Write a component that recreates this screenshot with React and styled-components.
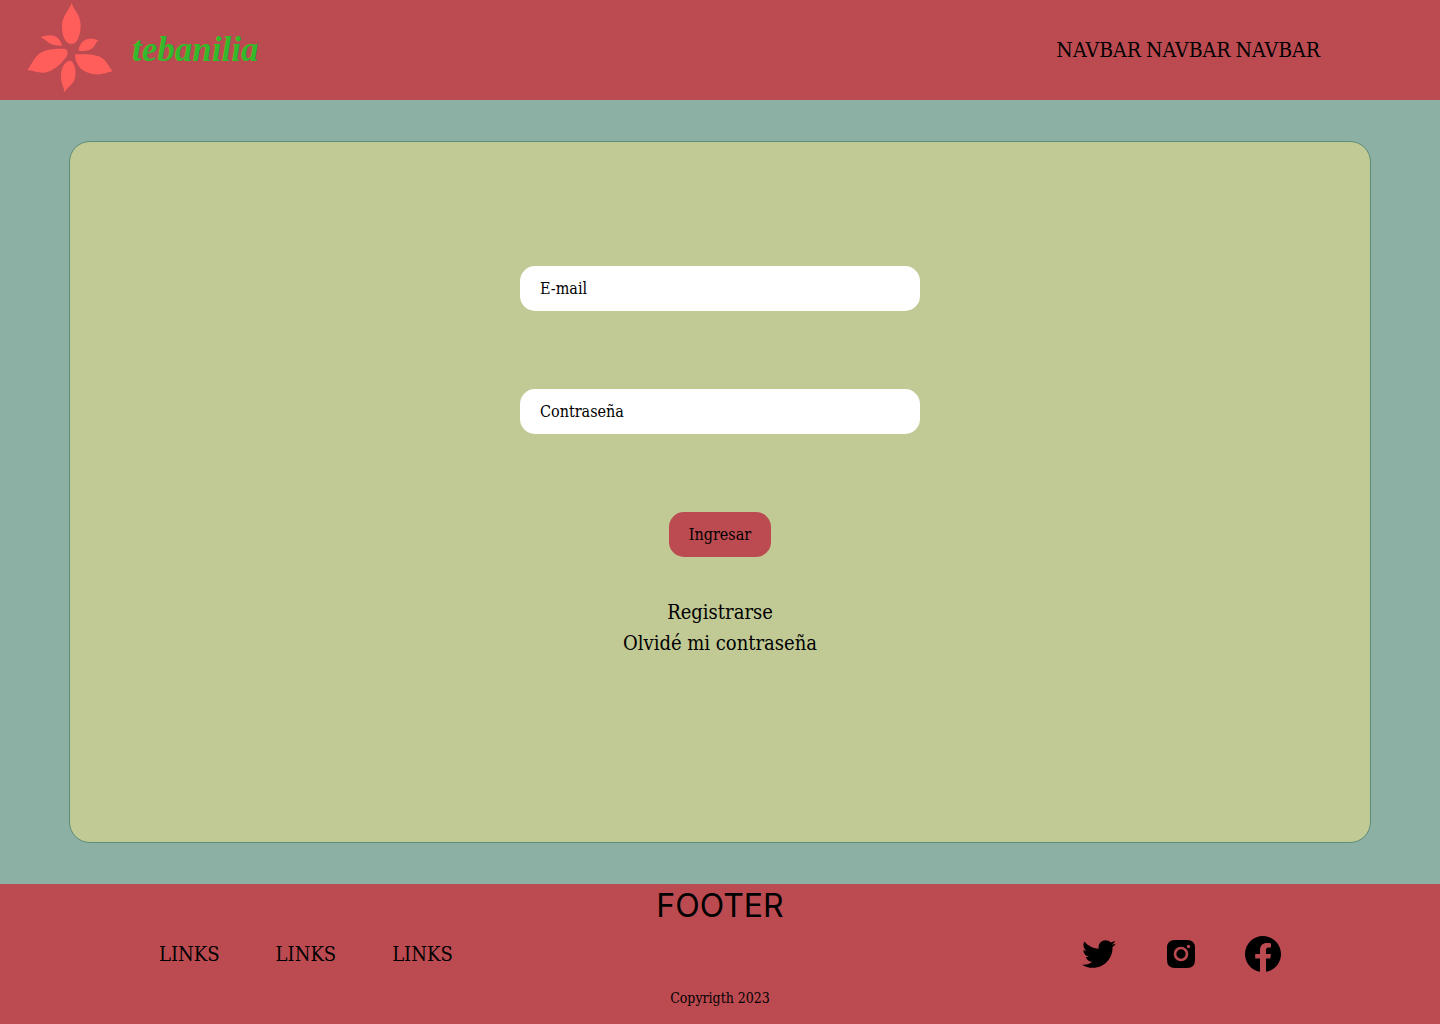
import React from "react";
import styled, { createGlobalStyle } from "styled-components";
import { FaTwitter } from "react-icons/fa";

const red = "#bc4b51";
const serif = `"DejaVu Serif Condensed", "DejaVu Serif", serif`;

const GlobalStyle = createGlobalStyle`
  * { box-sizing: border-box; }
  body { margin: 0; color: #000; font-family: ${serif}; }
  input, button { font: inherit; color: inherit; }
`;

const Page = styled.div`
  min-height: 100vh;
  display: flex;
  flex-direction: column;
  background: #8cb0a4;
`;

const Header = styled.header`
  height: 100px;
  display: flex;
  align-items: center;
  justify-content: space-between;
  padding: 0 120px 0 20px;
  background: ${red};
`;

const Brand = styled.a`
  display: flex;
  align-items: center;
  gap: 12px;
  color: #33b92a;
  text-decoration: none;
`;

const Wordmark = styled.span`
  font: italic bold 35px/40px "Liberation Serif", serif;
`;

const TextLink = styled.a`
  color: inherit;
  text-decoration: none;
  font-size: ${(p) => p.$size || 20}px;
  line-height: 31px;
`;

const NavList = styled.nav`
  display: flex;
  gap: 5px;
`;

const Main = styled.main`
  flex: 1;
  display: flex;
  padding: 41px 69px;
`;

const Card = styled.form`
  flex: 1;
  display: flex;
  flex-direction: column;
  align-items: center;
  padding: 124px 20px;
  background: #c1ca94;
  border: 1px solid #5b8e7d;
  border-radius: 21px;
`;

const Fields = styled.div`
  width: 100%;
  max-width: 400px;
  display: flex;
  flex-direction: column;
  align-items: center;
  gap: 78px;
`;

const Field = styled.input`
  width: 100%;
  height: 45px;
  padding: 0 20px;
  border: 0;
  border-radius: 15px;
  background: #fff;
  font-size: 16px;
  &::placeholder { color: #000; opacity: 1; }
`;

const Submit = styled.button`
  height: 45px;
  width: 102px;
  padding: 0;
  border: 0;
  border-radius: 15px;
  background: ${red};
  font-size: 16px;
  cursor: pointer;
`;

const HelpLinks = styled.nav`
  display: flex;
  flex-direction: column;
  align-items: center;
  margin-top: 40px;
`;

const Footer = styled.footer`
  background: ${red};
  padding-bottom: 8px;
  text-align: center;
`;

const FooterTitle = styled.h2`
  margin: 0;
  font: 400 32px/44px Inter, sans-serif;
`;

const FooterRow = styled.div`
  height: 52px;
  display: flex;
  align-items: center;
  justify-content: space-between;
  padding: 0 159px;
`;

const LinkGroup = styled.nav`
  display: flex;
  align-items: center;
  gap: ${(p) => p.$gap}px;
`;

const Social = styled.a`
  width: 36px;
  height: 36px;
  display: flex;
  align-items: center;
  justify-content: center;
  color: inherit;
`;

const Copyright = styled.p`
  margin: 0;
  font-size: 14px;
  line-height: 36px;
`;

const Flower = () => (
  <svg width="100" height="100" viewBox="0 0 300 300" fill="#ff5e5b" aria-hidden="true">
    <path d="M155 9C160 30 182 43 182 77C181 108 171 132 154 132C136 132 125 108 126 76C127 46 147 32 155 9Z" />
    <path d="M61 112C82 103 103 104 113 114C121 121 124 129 127 137C112 138 97 135 86 128C77 122 71 115 61 112Z" />
    <path d="M235 121C224 116 206 114 194 121C182 128 177 139 176 152C190 154 207 153 217 145C227 137 226 127 235 121Z" />
    <path d="M22 210C36 193 41 171 62 158C83 146 124 145 136 147C147 155 143 166 136 175C121 193 99 216 72 218C52 219 39 211 22 210Z" />
    <path d="M165 163C191 162 219 162 240 170C260 180 265 199 278 214C260 217 249 225 224 223C190 219 165 198 165 163Z" />
    <path d="M134 277C131 261 122 249 123 226C124 202 135 184 149 182C164 184 170 211 165 233C160 254 143 259 134 277Z" />
  </svg>
);

const Instagram = () => (
  <svg width="28" height="28" viewBox="0 0 28 28" aria-hidden="true">
    <path
      fillRule="evenodd"
      d="M8 0H20Q28 0 28 8V20Q28 28 20 28H8Q0 28 0 20V8Q0 0 8 0ZM14 6.700a7.300 7.300 0 1 0 0 14.600a7.300 7.300 0 1 0 0-14.600ZM14 9.300a4.700 4.700 0 1 1 0 9.400a4.700 4.700 0 1 1 0-9.400ZM21.500 4.800a1.700 1.700 0 1 0 0 3.400a1.700 1.700 0 1 0 0-3.400Z"
    />
  </svg>
);

const Facebook = () => (
  <svg width="36" height="36" viewBox="0 0 36 36" aria-hidden="true">
    <path d="M36 18C36 8.100 27.900 0 18 0S0 8.100 0 18C0 27 6.600 34.500 15 35.800V22.500H10.200V18H15V14C15 9.500 17.900 7 22 7C23.500 7 25.500 7.200 26 7.400V11.500H23.700C21.500 11.500 21 12.900 21 14.300V18H26L25.200 22.500H21V35.800C29.400 34.500 36 27 36 18Z" />
  </svg>
);

export default function App() {
  return (
    <Page>
      <GlobalStyle />
      <Header>
        <Brand href="#">
          <Flower />
          <Wordmark>tebanilia</Wordmark>
        </Brand>
        <NavList>
          {[1, 2, 3].map((n) => (
            <TextLink key={n} href="#" $size={21}>NAVBAR</TextLink>
          ))}
        </NavList>
      </Header>
      <Main>
        <Card onSubmit={(e) => e.preventDefault()}>
          <Fields>
            <Field type="email" aria-label="E-mail" placeholder="E-mail" />
            <Field type="password" aria-label="Contraseña" placeholder="Contraseña" />
            <Submit type="submit">Ingresar</Submit>
          </Fields>
          <HelpLinks>
            <TextLink href="#">Registrarse</TextLink>
            <TextLink href="#">Olvidé mi contraseña</TextLink>
          </HelpLinks>
        </Card>
      </Main>
      <Footer>
        <FooterTitle>FOOTER</FooterTitle>
        <FooterRow>
          <LinkGroup $gap={56}>
            {[1, 2, 3].map((n) => (
              <TextLink key={n} href="#">LINKS</TextLink>
            ))}
          </LinkGroup>
          <LinkGroup $gap={46}>
            <Social href="#" aria-label="Twitter"><FaTwitter size={34} /></Social>
            <Social href="#" aria-label="Instagram"><Instagram /></Social>
            <Social href="#" aria-label="Facebook"><Facebook /></Social>
          </LinkGroup>
        </FooterRow>
        <Copyright>Copyrigth 2023</Copyright>
      </Footer>
    </Page>
  );
}
